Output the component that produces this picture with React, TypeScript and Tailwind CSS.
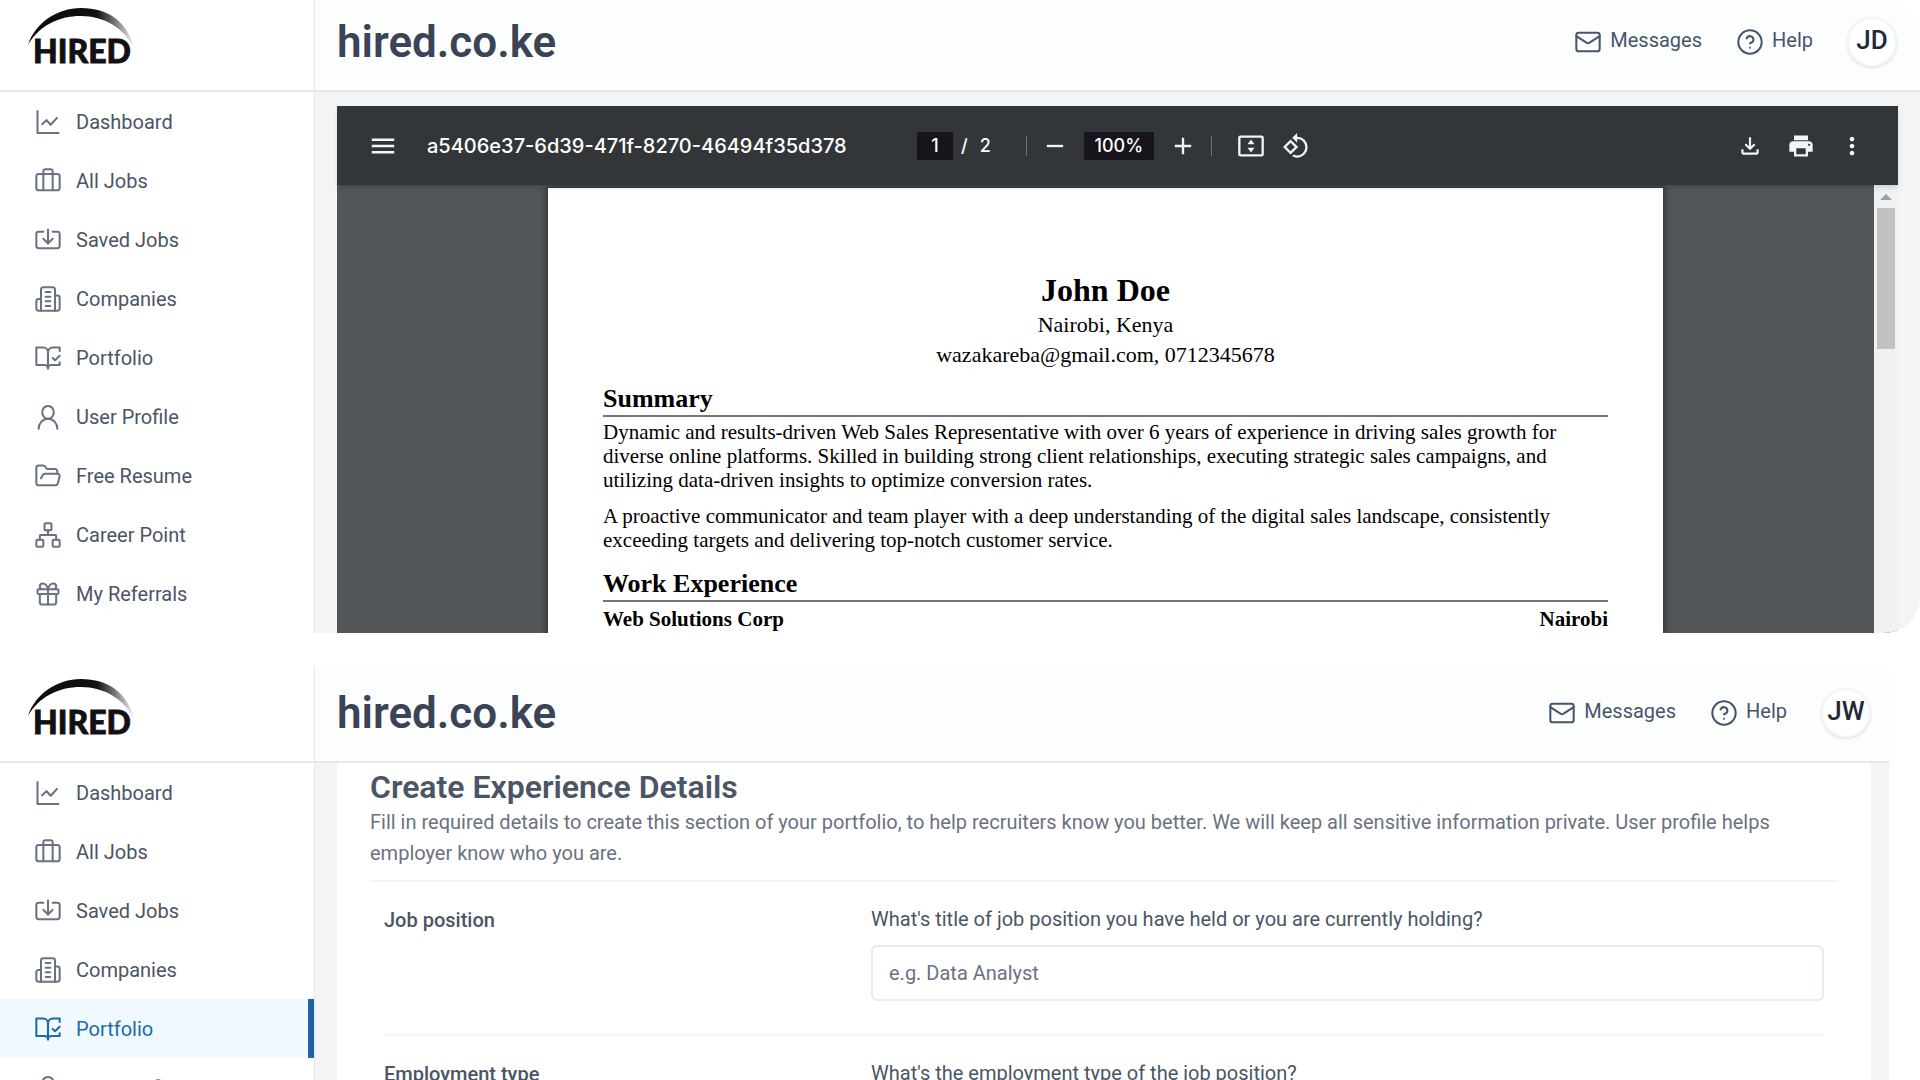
import {
  Briefcase,
  CircleHelp,
  FolderOpen,
  Gift,
  Import,
  Mail,
  Network,
} from "lucide-react";
import {
  MdAdd,
  MdMenu,
  MdMoreVert,
  MdOutlineFileDownload,
  MdPrint,
  MdRemove,
  MdRotate90DegreesCcw,
} from "react-icons/md";

import type { ComponentType, ReactNode } from "react";

type IconProps = { className?: string; strokeWidth?: number };

function StrokeIcon({ className, strokeWidth, paths }: IconProps & { paths: string[] }) {
  return (
    <svg className={className} viewBox="0 0 24 24" fill="none" stroke="currentColor" strokeWidth={strokeWidth} strokeLinecap="round" strokeLinejoin="round">
      {paths.map((d) => <path key={d} d={d} />)}
    </svg>
  );
}

const ChartIcon = (props: IconProps) => (
  <StrokeIcon {...props} paths={["M3 2.5v19h18", "m7 14 3.7-3.6 3.6 4 5.4-5.9"]} />
);

const BuildingIcon = (props: IconProps) => (
  <StrokeIcon
    {...props}
    paths={[
      "M6 22V4a2 2 0 0 1 2-2h8a2 2 0 0 1 2 2v18Z",
      "M6 12H4a2 2 0 0 0-2 2v6a2 2 0 0 0 2 2h2",
      "M18 9h2a2 2 0 0 1 2 2v9a2 2 0 0 1-2 2h-2",
      "M10 6h4",
      "M10 10h4",
      "M10 14h4",
      "M10 18h4",
    ]}
  />
);

const BookCheckIcon = (props: IconProps) => (
  <StrokeIcon
    {...props}
    paths={[
      "M8 3H2v15h7c1.7 0 3 1.3 3 3V7c0-2.2-1.8-4-4-4Z",
      "m16 12 2 2 4-4",
      "M22 6V3h-6c-2.2 0-4 1.8-4 4v14c0-1.7 1.3-3 3-3h7v-2.3",
    ]}
  />
);

const PersonIcon = (props: IconProps) => (
  <StrokeIcon
    {...props}
    paths={["M12 2.5a5 5.5 0 1 0 0 11a5 5.5 0 1 0 0-11Z", "M20 22a8 8.5 0 0 0-16 0"]}
  />
);

function FitPageIcon({ className }: IconProps) {
  return (
    <svg className={className} viewBox="0 0 24 24" fill="currentColor">
      <path fillRule="evenodd" d="M3 3h18a2 2 0 0 1 2 2v14a2 2 0 0 1-2 2H3a2 2 0 0 1-2-2V5a2 2 0 0 1 2-2Zm0 2v14h18V5Z" />
      <path d="m12 6.5 3 4H9ZM12 17.5l3-4H9Z" />
    </svg>
  );
}

const navItems: { label: string; icon: ComponentType<IconProps> }[] = [
  { label: "Dashboard", icon: ChartIcon },
  { label: "All Jobs", icon: Briefcase },
  { label: "Saved Jobs", icon: Import },
  { label: "Companies", icon: BuildingIcon },
  { label: "Portfolio", icon: BookCheckIcon },
  { label: "User Profile", icon: PersonIcon },
  { label: "Free Resume", icon: FolderOpen },
  { label: "Career Point", icon: Network },
  { label: "My Referrals", icon: Gift },
];

function Logo({ id }: { id: string }) {
  return (
    <svg viewBox="0 0 110 62" className="h-[62px] w-[110px]" role="img" aria-label="Hired">
      <defs>
        <linearGradient id={id} x1="0" x2="1" y1="0" y2="0">
          <stop offset="0" stopColor="#0c0c0e" />
          <stop offset="0.65" stopColor="#111113" />
          <stop offset="0.85" stopColor="#8a8a8c" />
          <stop offset="1" stopColor="#f4f4f4" />
        </linearGradient>
      </defs>
      <path d="M0 37C7 15 29 0 53 0c27 0 47 14 53 40C96 20 76 8 53 8 30 8 11 18 0 37Z" fill={`url(#${id})`} />
      <text x="5" y="55" fontFamily="Lato, sans-serif" fontWeight="900" fontSize="32" fill="#111113" stroke="#111113" strokeWidth="0.8">HIRED</text>
    </svg>
  );
}

function Sidebar({ id, active, headerClass }: { id: string; active?: string; headerClass: string }) {
  return (
    <aside className="w-[315px] shrink-0 border-r border-gray-200 bg-white">
      <div className={`flex items-end border-b-2 border-gray-200 pb-5 pl-7 ${headerClass}`}>
        <Logo id={id} />
      </div>
      <nav className="pb-[10px]">
        {navItems.map(({ label, icon: Icon }) => (
          <a
            key={label}
            href="#"
            className={`flex h-[59px] items-center gap-[14px] pl-[34px] text-xl ${label === active ? "border-r-6 border-[#1c64a4] bg-[#f0f9ff] text-[#1c6aad]" : "text-gray-600"}`}
          >
            <Icon className={`size-7 ${label === active ? "" : "text-gray-500"}`} strokeWidth={1.75} />
            {label}
          </a>
        ))}
      </nav>
    </aside>
  );
}

function TopBar({ initials, headerClass }: { initials: string; headerClass: string }) {
  return (
    <header className={`flex shrink-0 items-end justify-between border-b-2 border-gray-200 bg-[#fcfefe] pl-[22px] ${headerClass}`}>
      <h1 className="pb-[25px] text-[44px] leading-[46px] font-semibold text-[#3b4357]">hired.co.ke</h1>
      <div className="flex items-center pb-[23px] text-xl text-slate-600">
        <a href="#" className="mr-[34px] flex items-center gap-2">
          <Mail className="size-7" strokeWidth={1.75} />
          <span className="pb-1">Messages</span>
        </a>
        <a href="#" className="mr-[34px] flex items-center gap-2">
          <CircleHelp className="size-7" strokeWidth={1.75} />
          <span className="pb-1">Help</span>
        </a>
        <button className="size-[50px] rounded-full border-2 border-gray-100 bg-white pb-1 text-[26px] leading-none font-medium text-gray-800 shadow-sm">
          {initials}
        </button>
      </div>
    </header>
  );
}

function ToolbarButton({ label, children }: { label: string; children: ReactNode }) {
  return (
    <button aria-label={label} className="flex size-7 items-center justify-center text-gray-100">
      {children}
    </button>
  );
}

function ViewerToolbar() {
  return (
    <div className="z-10 flex h-[79px] shrink-0 items-center bg-[#323639] px-8 font-[Inter,sans-serif] text-white shadow-md">
      <ToolbarButton label="Menu"><MdMenu className="size-[30px] shrink-0" /></ToolbarButton>
      <span className="ml-[30px] w-[420px] text-xl font-medium whitespace-nowrap">a5406e37-6d39-471f-8270-46494f35d378</span>
      <input aria-label="Page" defaultValue="1" className="ml-[70px] h-7 w-9 bg-[#17141c] text-center text-lg font-medium" />
      <span className="ml-2 text-lg font-medium">/</span>
      <span className="ml-3 text-lg font-medium">2</span>
      <span className="ml-[35px] h-5 w-px bg-gray-500" />
      <div className="ml-[14px] flex items-center gap-[15px]">
        <ToolbarButton label="Zoom out"><MdRemove className="size-7" /></ToolbarButton>
        <input aria-label="Zoom" defaultValue="100%" className="h-7 w-[70px] bg-[#17141c] text-center text-lg font-medium" />
        <ToolbarButton label="Zoom in"><MdAdd className="size-7" /></ToolbarButton>
      </div>
      <span className="ml-[14px] h-5 w-px bg-gray-500" />
      <div className="ml-[25px] flex items-center gap-[17px]">
        <ToolbarButton label="Fit to page"><FitPageIcon className="size-7" /></ToolbarButton>
        <ToolbarButton label="Rotate"><MdRotate90DegreesCcw className="size-7" /></ToolbarButton>
      </div>
      <div className="ml-auto flex items-center gap-[23px]">
        <ToolbarButton label="Download"><MdOutlineFileDownload className="size-[26px]" /></ToolbarButton>
        <ToolbarButton label="Print"><MdPrint className="size-7" /></ToolbarButton>
        <ToolbarButton label="More"><MdMoreVert className="size-7" /></ToolbarButton>
      </div>
    </div>
  );
}

function Resume() {
  return (
    <article className="mx-[211px] mt-[3px] flex-1 bg-white px-[55px] font-['Liberation_Serif',serif] text-[22px] leading-6 text-black shadow-[0_0_6px_2px_rgba(0,0,0,0.4)]">
      <div className="pt-[82px] text-center">
        <h2 className="text-[32px] leading-10 font-bold">John Doe</h2>
        <p className="leading-[30px]">Nairobi, Kenya</p>
        <p className="leading-[30px]">wazakareba@gmail.com, 0712345678</p>
      </div>
      <h3 className="mt-[13px] border-b-2 border-[#777777] text-[26px] leading-8 font-bold">Summary</h3>
      <div className="mt-[3px] text-[21px] leading-6">
        <p>
          Dynamic and results-driven Web Sales Representative with over 6 years of experience in driving sales growth for
          <br />
          diverse online platforms. Skilled in building strong client relationships, executing strategic sales campaigns, and
          <br />
          utilizing data-driven insights to optimize conversion rates.
        </p>
        <p className="mt-3">
          A proactive communicator and team player with a deep understanding of the digital sales landscape, consistently
          <br />
          exceeding targets and delivering top-notch customer service.
        </p>
      </div>
      <h3 className="mt-4 border-b-2 border-[#777777] text-[26px] leading-8 font-bold">Work Experience</h3>
      <div className="mt-[5px] flex justify-between text-[21px] leading-6 font-bold">
        <span>Web Solutions Corp</span>
        <span>Nairobi</span>
      </div>
    </article>
  );
}

function ViewerScrollbar() {
  return (
    <div className="flex w-6 flex-col items-center bg-[#f0f1f2] pt-[9px]">
      <span className="border-x-6 border-b-6 border-x-transparent border-b-gray-400" />
      <span className="mt-2 h-[141px] w-[18px] bg-[#c1c1c3]" />
    </div>
  );
}

function FormRow({ id, title, question, children }: { id: string; title: string; question: string; children: ReactNode }) {
  return (
    <div className="mx-[14px] flex border-b-2 border-gray-100 pt-[23px] pb-[33px]">
      <h3 className="w-[487px] shrink-0 pt-px text-xl leading-7 font-medium text-gray-600">{title}</h3>
      <div className="flex-1">
        <label htmlFor={id} className="block text-xl leading-7 text-gray-600">{question}</label>
        {children}
      </div>
    </div>
  );
}

function ExperienceForm() {
  return (
    <section className="mr-[18px] ml-[22px] flex-1 bg-white px-[33px]">
      <div className="border-b-2 border-gray-100 pt-1 pb-[11px]">
        <h2 className="text-[32px] leading-10 font-semibold text-gray-600">Create Experience Details</h2>
        <p className="text-xl leading-[31px] text-gray-500">
          Fill in required details to create this section of your portfolio, to help recruiters know you better. We will keep all sensitive information private. User profile helps employer know who you are.
        </p>
      </div>
      <FormRow id="position" title="Job position" question="What's title of job position you have held or you are currently holding?">
        <input id="position" placeholder="e.g. Data Analyst" className="mt-3 h-14 w-full rounded-md border-2 border-[#e6ecf1] px-4 text-xl text-gray-600 placeholder:text-gray-500" />
      </FormRow>
      <FormRow id="employment" title="Employment type" question="What's the employment type of the job position?">
        <select id="employment" className="mt-3 h-14 w-full rounded-md border-2 border-[#e6ecf1] px-4 text-xl text-gray-500" />
      </FormRow>
    </section>
  );
}

export default function App() {
  return (
    <div className="flex h-screen flex-col gap-[33px] overflow-hidden bg-white font-[Roboto,sans-serif]">
      <div className="flex shrink-0 overflow-hidden rounded-r-[36px]">
        <Sidebar id="arc-top" headerClass="h-[92px]" />
        <div className="flex min-w-0 flex-1 flex-col bg-gray-100">
          <TopBar initials="JD" headerClass="h-[92px] pr-[23px]" />
          <div className="mt-[14px] mr-[22px] ml-[22px] flex flex-1 flex-col bg-[#525659]">
            <ViewerToolbar />
            <div className="flex flex-1">
              <div className="flex flex-1 flex-col">
                <Resume />
              </div>
              <ViewerScrollbar />
            </div>
          </div>
        </div>
      </div>
      <div className="mr-[31px] flex min-h-0 flex-1 overflow-hidden">
        <Sidebar id="arc-bottom" active="Portfolio" headerClass="h-[97px]" />
        <div className="flex min-w-0 flex-1 flex-col bg-gray-100">
          <TopBar initials="JW" headerClass="h-[97px] pr-[18px]" />
          <ExperienceForm />
        </div>
      </div>
    </div>
  );
}
